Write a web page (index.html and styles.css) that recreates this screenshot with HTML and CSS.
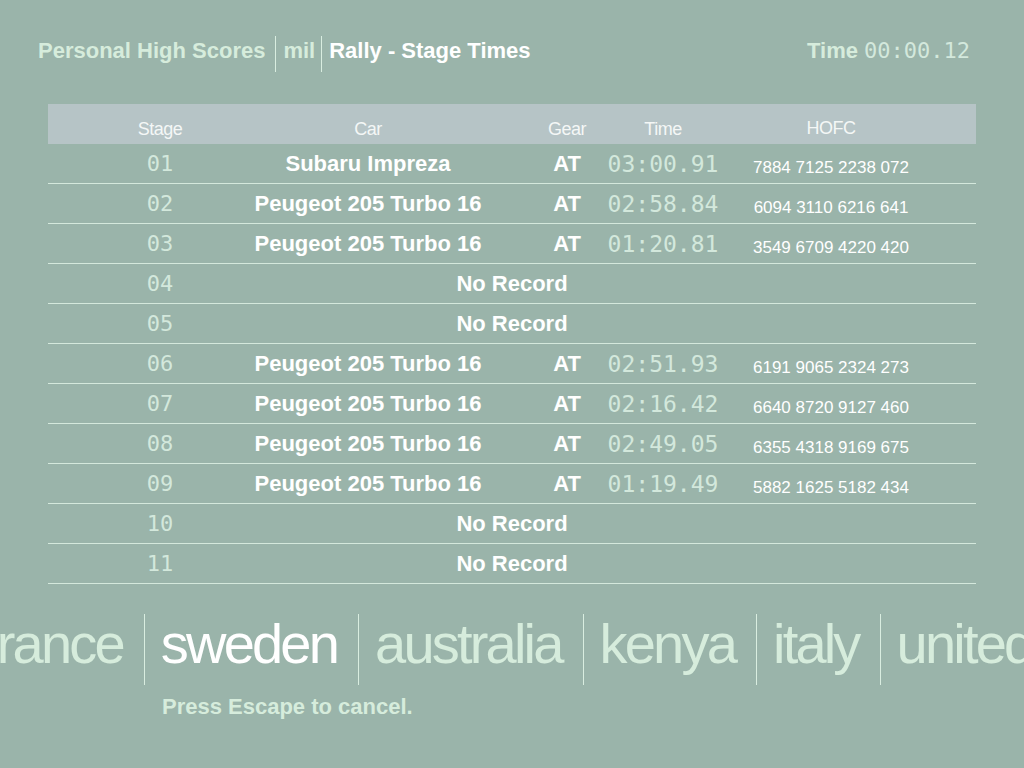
FILE: index.html
```html
<!DOCTYPE html>
<html lang="en">
<head>
<meta charset="utf-8">
<title>Personal High Scores</title>
<link rel="stylesheet" href="styles.css">
</head>
<body>
<div class="screen">
  <header class="topbar">
    <div class="crumbs">
      <span class="crumb pale">Personal High Scores</span>
      <span class="sep"></span>
      <span class="crumb pale">mil</span>
      <span class="sep"></span>
      <span class="crumb white">Rally - Stage Times</span>
    </div>
    <div class="clock">
      <span class="clock-label">Time</span>
      <span class="lcd clock-value">00:00.12</span>
    </div>
  </header>

  <section class="scores">
    <div class="row head">
      <span class="c-stage">Stage</span>
      <span class="c-car">Car</span>
      <span class="c-gear">Gear</span>
      <span class="c-time">Time</span>
      <span class="c-hofc">HOFC</span>
    </div>
    <div class="row">
      <span class="c-stage lcd">01</span>
      <span class="c-car">Subaru Impreza</span>
      <span class="c-gear">AT</span>
      <span class="c-time lcd">03:00.91</span>
      <span class="c-hofc">7884 7125 2238 072</span>
    </div>
    <div class="row">
      <span class="c-stage lcd">02</span>
      <span class="c-car">Peugeot 205 Turbo 16</span>
      <span class="c-gear">AT</span>
      <span class="c-time lcd">02:58.84</span>
      <span class="c-hofc">6094 3110 6216 641</span>
    </div>
    <div class="row">
      <span class="c-stage lcd">03</span>
      <span class="c-car">Peugeot 205 Turbo 16</span>
      <span class="c-gear">AT</span>
      <span class="c-time lcd">01:20.81</span>
      <span class="c-hofc">3549 6709 4220 420</span>
    </div>
    <div class="row">
      <span class="c-stage lcd">04</span>
      <span class="c-none">No Record</span>
    </div>
    <div class="row">
      <span class="c-stage lcd">05</span>
      <span class="c-none">No Record</span>
    </div>
    <div class="row">
      <span class="c-stage lcd">06</span>
      <span class="c-car">Peugeot 205 Turbo 16</span>
      <span class="c-gear">AT</span>
      <span class="c-time lcd">02:51.93</span>
      <span class="c-hofc">6191 9065 2324 273</span>
    </div>
    <div class="row">
      <span class="c-stage lcd">07</span>
      <span class="c-car">Peugeot 205 Turbo 16</span>
      <span class="c-gear">AT</span>
      <span class="c-time lcd">02:16.42</span>
      <span class="c-hofc">6640 8720 9127 460</span>
    </div>
    <div class="row">
      <span class="c-stage lcd">08</span>
      <span class="c-car">Peugeot 205 Turbo 16</span>
      <span class="c-gear">AT</span>
      <span class="c-time lcd">02:49.05</span>
      <span class="c-hofc">6355 4318 9169 675</span>
    </div>
    <div class="row">
      <span class="c-stage lcd">09</span>
      <span class="c-car">Peugeot 205 Turbo 16</span>
      <span class="c-gear">AT</span>
      <span class="c-time lcd">01:19.49</span>
      <span class="c-hofc">5882 1625 5182 434</span>
    </div>
    <div class="row">
      <span class="c-stage lcd">10</span>
      <span class="c-none">No Record</span>
    </div>
    <div class="row">
      <span class="c-stage lcd">11</span>
      <span class="c-none">No Record</span>
    </div>
  </section>

  <nav class="countries">
    <span class="country">france</span>
    <span class="vline"></span>
    <span class="country active">sweden</span>
    <span class="vline"></span>
    <span class="country">australia</span>
    <span class="vline"></span>
    <span class="country">kenya</span>
    <span class="vline"></span>
    <span class="country">italy</span>
    <span class="vline"></span>
    <span class="country">united kingdom</span>
  </nav>

  <p class="hint">Press Escape to cancel.</p>
</div>
</body>
</html>
```

FILE: styles.css
```css
* { box-sizing: border-box; }

html, body {
  margin: 0;
  padding: 0;
  width: 1024px;
  height: 768px;
  overflow: hidden;
  background: #9ab4aa;
}

.screen {
  width: 1024px;
  height: 768px;
  overflow: hidden;
  font-family: "Liberation Sans", Arial, sans-serif;
  color: #ffffff;
}

.lcd {
  font-family: "DejaVu Sans Mono", "Liberation Mono", monospace;
  font-weight: normal;
  font-variant-numeric: slashed-zero;
  color: #d3e8dc;
}

/* top bar */
.topbar {
  display: flex;
  justify-content: space-between;
  align-items: center;
  height: 36px;
  margin-top: 36px;
  padding: 0 54px 0 38px;
}

.crumbs {
  display: flex;
  align-items: center;
  height: 100%;
}

.crumb {
  font-size: 22px;
  font-weight: bold;
  line-height: 22px;
  padding-bottom: 7px;
}

.pale { color: #d6ecdc; }
.white { color: #ffffff; }

.sep {
  width: 1px;
  height: 36px;
  background: #d9ede0;
  margin: 0 7px 0 10px;
}

.crumbs .sep + .crumb.pale + .sep {
  margin-left: 6px;
}

.clock {
  display: flex;
  align-items: center;
  gap: 6px;
  padding-bottom: 7px;
}

.clock-label {
  font-size: 22px;
  font-weight: bold;
  color: #d6ecdc;
}

.clock-value {
  font-size: 22px;
}

/* table */
.scores {
  margin: 32px 48px 0 48px;
}

.row {
  display: grid;
  grid-template-columns: 224px 192px 72px 62px 130px 206px 1fr;
  grid-template-rows: 39px;
  height: 40px;
  align-items: center;
  border-bottom: 1px solid #d4e8dc;
  font-size: 22px;
  font-weight: bold;
  line-height: 26px;
  white-space: nowrap;
}

.row > span {
  text-align: center;
  display: flex;
  justify-content: center;
  padding-top: 1px;
}

.row.head {
  background: #b6c4c6;
  border-bottom: none;
  grid-template-rows: 40px;
  font-size: 18px;
  font-weight: normal;
  letter-spacing: -0.5px;
  color: #f4f7f6;
  padding-top: 4px;
}

.c-stage { grid-column: 1; }
.c-car { grid-column: 2; }
.c-gear { grid-column: 4; }
.c-time { grid-column: 5; }
.c-hofc { grid-column: 6; }
.c-none { grid-column: 2 / -1; padding-right: 224px; }

.row .c-stage.lcd {
  font-size: 22px;
}

.row .c-time.lcd {
  font-size: 23px;
}

.row .c-hofc {
  font-size: 17px;
  font-weight: normal;
  line-height: 20px;
  padding-top: 8px;
}

.row.head .c-hofc {
  font-size: 18px;
  line-height: 26px;
  padding-top: 0;
}

/* countries */
.countries {
  display: flex;
  align-items: flex-start;
  height: 71px;
  margin-top: 30px;
  margin-left: -16px;
  white-space: nowrap;
}

.country {
  font-size: 56px;
  line-height: 56px;
  letter-spacing: -2.8px;
  margin-top: 2px;
  color: #d6ecdc;
  flex: none;
}

.country.active {
  color: #ffffff;
}

.vline {
  flex: none;
  width: 1px;
  height: 71px;
  background: #d9ede0;
  margin: 0 16px 0 21px;
}

.hint {
  margin: 11px 0 0 162px;
  font-size: 22px;
  font-weight: bold;
  line-height: 22px;
  color: #d6ecdc;
}
```
